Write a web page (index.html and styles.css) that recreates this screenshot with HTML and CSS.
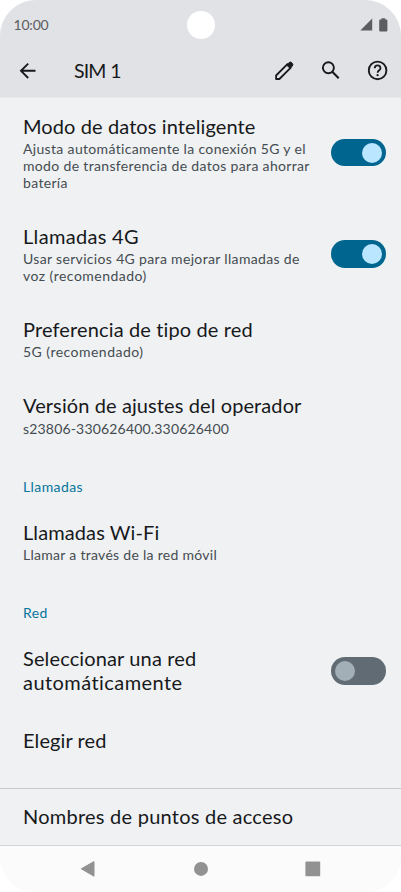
FILE: index.html
```
<!DOCTYPE html>
<html lang="es">
<head>
<meta charset="utf-8">
<title>SIM 1</title>
<link rel="stylesheet" href="styles.css">
</head>
<body>
<div class="phone">
  <header class="header">
    <div class="status">
      <span class="clock">10:00</span>
      <span class="camera"></span>
      <span class="status-icons">
        <svg width="13" height="14" viewBox="0 0 13 14"><path d="M0.3 12.6L12.2 0.6V12.6Z" fill="#5c5d60"/></svg>
        <svg width="9" height="14" viewBox="0 0 9 14"><path d="M2.4 0.3h3.8v1.2h1.2a1 1 0 0 1 1 1v10a1 1 0 0 1-1 1h-6.2a1 1 0 0 1-1-1v-10a1 1 0 0 1 1-1h1.2z" fill="#5c5d60"/></svg>
      </span>
    </div>
    <div class="bar">
      <svg class="icon-back" width="24" height="24" viewBox="0 0 24 24" fill="none" stroke="#17191b" stroke-width="1.9"><path d="M19.5 11.8H5.5M12.2 4.6L5 11.8l7.2 7.2"/></svg>
      <h1 class="bar-title">SIM 1</h1>
      <div class="actions">
        <svg width="24" height="24" viewBox="0 0 24 24" fill="none" stroke="#17191b" stroke-width="1.8" stroke-linejoin="round"><path d="M4.1 20v-3.5L15.4 5.2l3.4 3.4L7.4 20z"/><path d="M14.6 6l2.1-2.1a2.1 2.1 0 0 1 3.2 0l.2.2a2.1 2.1 0 0 1 0 3.1L18 9.3z" fill="#17191b" stroke-width="1"/></svg>
        <svg width="24" height="24" viewBox="0 0 24 24" fill="none" stroke="#17191b" stroke-width="1.9"><circle cx="9.4" cy="8.8" r="5.5"/><path d="M13.3 12.8l6.4 6.4" stroke-width="2.1"/></svg>
        <svg width="24" height="24" viewBox="0 0 24 24" fill="none" stroke="#17191b" stroke-width="1.9"><circle cx="11.6" cy="11.4" r="8.8"/><path d="M8.7 9.3a2.9 2.9 0 0 1 5.8 0c0 2-2.9 2.1-2.9 4.5" stroke-width="1.8"/><circle cx="11.6" cy="16.2" r="1.1" fill="#17191b" stroke="none"/></svg>
      </div>
    </div>
  </header>

  <main class="list">
    <section class="item item-three">
      <div class="text">
        <h2 class="title"><span class="ls-a">Modo de datos inteligente</span></h2>
        <p class="sub"><span class="ls-b">Ajusta automáticamente la conexión 5G y el</span><br><span class="ls-b">modo de transferencia de datos para ahorrar</span><br><span class="ls-b">batería</span></p>
      </div>
      <span class="toggle on"></span>
    </section>
    <section class="item item-two">
      <div class="text">
        <h2 class="title"><span class="ls-c">Llamadas 4G</span></h2>
        <p class="sub"><span class="ls-b">Usar servicios 4G para mejorar llamadas de</span><br><span class="ls-d">voz (recomendado)</span></p>
      </div>
      <span class="toggle on"></span>
    </section>
    <section class="item">
      <div class="text">
        <h2 class="title"><span class="ls-e">Preferencia de tipo de red</span></h2>
        <p class="sub"><span class="ls-d">5G (recomendado)</span></p>
      </div>
    </section>
    <section class="item">
      <div class="text">
        <h2 class="title"><span class="ls-a">Versión de ajustes del operador</span></h2>
        <p class="sub sub-low"><span class="ls-f">s23806-330626400.330626400</span></p>
      </div>
    </section>
    <h3 class="label">Llamadas</h3>
    <section class="item">
      <div class="text">
        <h2 class="title"><span class="ls-a">Llamadas Wi-Fi</span></h2>
        <p class="sub"><span class="ls-g">Llamar a través de la red móvil</span></p>
      </div>
    </section>
    <h3 class="label label-short">Red</h3>
    <section class="item item-wrap">
      <div class="text">
        <h2 class="title"><span class="ls-e">Seleccionar una red</span><br><span class="ls-h">automáticamente</span></h2>
      </div>
      <span class="toggle"></span>
    </section>
    <section class="item">
      <div class="text"><h2 class="title"><span class="ls-a">Elegir red</span></h2></div>
    </section>
    <section class="item item-last">
      <div class="text"><h2 class="title"><span class="ls-i">Nombres de puntos de acceso</span></h2></div>
    </section>
  </main>

  <nav class="nav">
    <svg width="16" height="18" viewBox="0 0 16 18"><path d="M1.3 8.8L14 1.6V16.2Z" fill="#929292" stroke="#929292" stroke-width="1" stroke-linejoin="round"/></svg>
    <svg width="16" height="18" viewBox="0 0 16 18"><circle cx="8" cy="8.9" r="7" fill="#929292"/></svg>
    <svg width="16" height="18" viewBox="0 0 16 18"><rect x="0.4" y="1.5" width="14.8" height="14.8" rx="1" fill="#929292"/></svg>
  </nav>
</div>
</body>
</html>
```
FILE: styles.css
```
* { box-sizing: border-box; margin: 0; padding: 0; }
body { background: #fff; font-family: Lato, "Liberation Sans", sans-serif; color: #17191b; }
svg { display: block; flex: none; }
.phone { width: 401px; height: 892px; border-radius: 36px; overflow: hidden; background: #eff1f3; display: flex; flex-direction: column; }

.header { height: 98px; flex: none; background: #e1e2e6; border-bottom: 1px solid #e9eaed; }
.status { height: 49px; display: grid; grid-template-columns: 1fr auto 1fr; align-items: center; padding: 0 13.5px 0 13.5px; }
.clock { font-size: 14px; letter-spacing: -0.2px; color: #5c5d60; }
.camera { width: 28px; height: 28px; border-radius: 50%; background: #fff; }
.status-icons { display: flex; justify-content: flex-end; gap: 6px; }
.bar { height: 43px; display: flex; align-items: center; padding: 0 11px 0 15.5px; }
.bar-title { margin-left: 34.5px; font-size: 19.5px; font-weight: 400; letter-spacing: -0.95px; word-spacing: 1px; line-height: 24px; }
.actions { margin-left: auto; display: flex; gap: 23px; }

.list { flex: 1; }
.item { height: 76px; padding: 16px 15.5px 0 23px; display: flex; justify-content: space-between; align-items: flex-start; }
.item-three { height: 110px; }
.item-two { height: 93px; }
.item-wrap { height: 82px; }
.item-last { height: 58px; padding-top: 15px; border-top: 1px solid #c8cacc; border-bottom: 1px solid #d3d4d6; }
.title { font-size: 20px; font-weight: 400; line-height: 24px; white-space: nowrap; }
.sub { margin-top: 3px; font-size: 14px; line-height: 16.8px; color: #454c51; white-space: nowrap; }
.sub-low { margin-top: 4px; }
.label { height: 51px; padding: 26px 23px 0; font-size: 14px; font-weight: 400; line-height: 16.8px; letter-spacing: 0.4px; color: #08759b; }
.label-short { height: 50px; padding-top: 25px; }

.toggle { flex: none; align-self: center; width: 54.5px; height: 27.6px; margin-top: -17px; border-radius: 14px; padding: 3.8px; display: flex; background: #606b73; }
.toggle::before { content: ""; width: 20px; height: 20px; border-radius: 50%; background: #a2afb6; }
.toggle.on { background: #00668f; justify-content: flex-end; }
.toggle.on::before { background: #bae6ff; }
.item-wrap .toggle { margin-top: -16px; }

.ls-a { letter-spacing: 0.1px; }
.ls-b { letter-spacing: 0.335px; }
.ls-c { letter-spacing: 0.32px; }
.ls-d { letter-spacing: 0.47px; }
.ls-e { letter-spacing: 0.13px; }
.ls-f { letter-spacing: 0.18px; }
.ls-g { letter-spacing: 0.285px; }
.ls-h { letter-spacing: 0.44px; }
.ls-i { letter-spacing: 0.24px; }

.nav { height: 46px; flex: none; display: flex; justify-content: center; align-items: center; gap: 96.5px; background: #fbfbfb; }
```
